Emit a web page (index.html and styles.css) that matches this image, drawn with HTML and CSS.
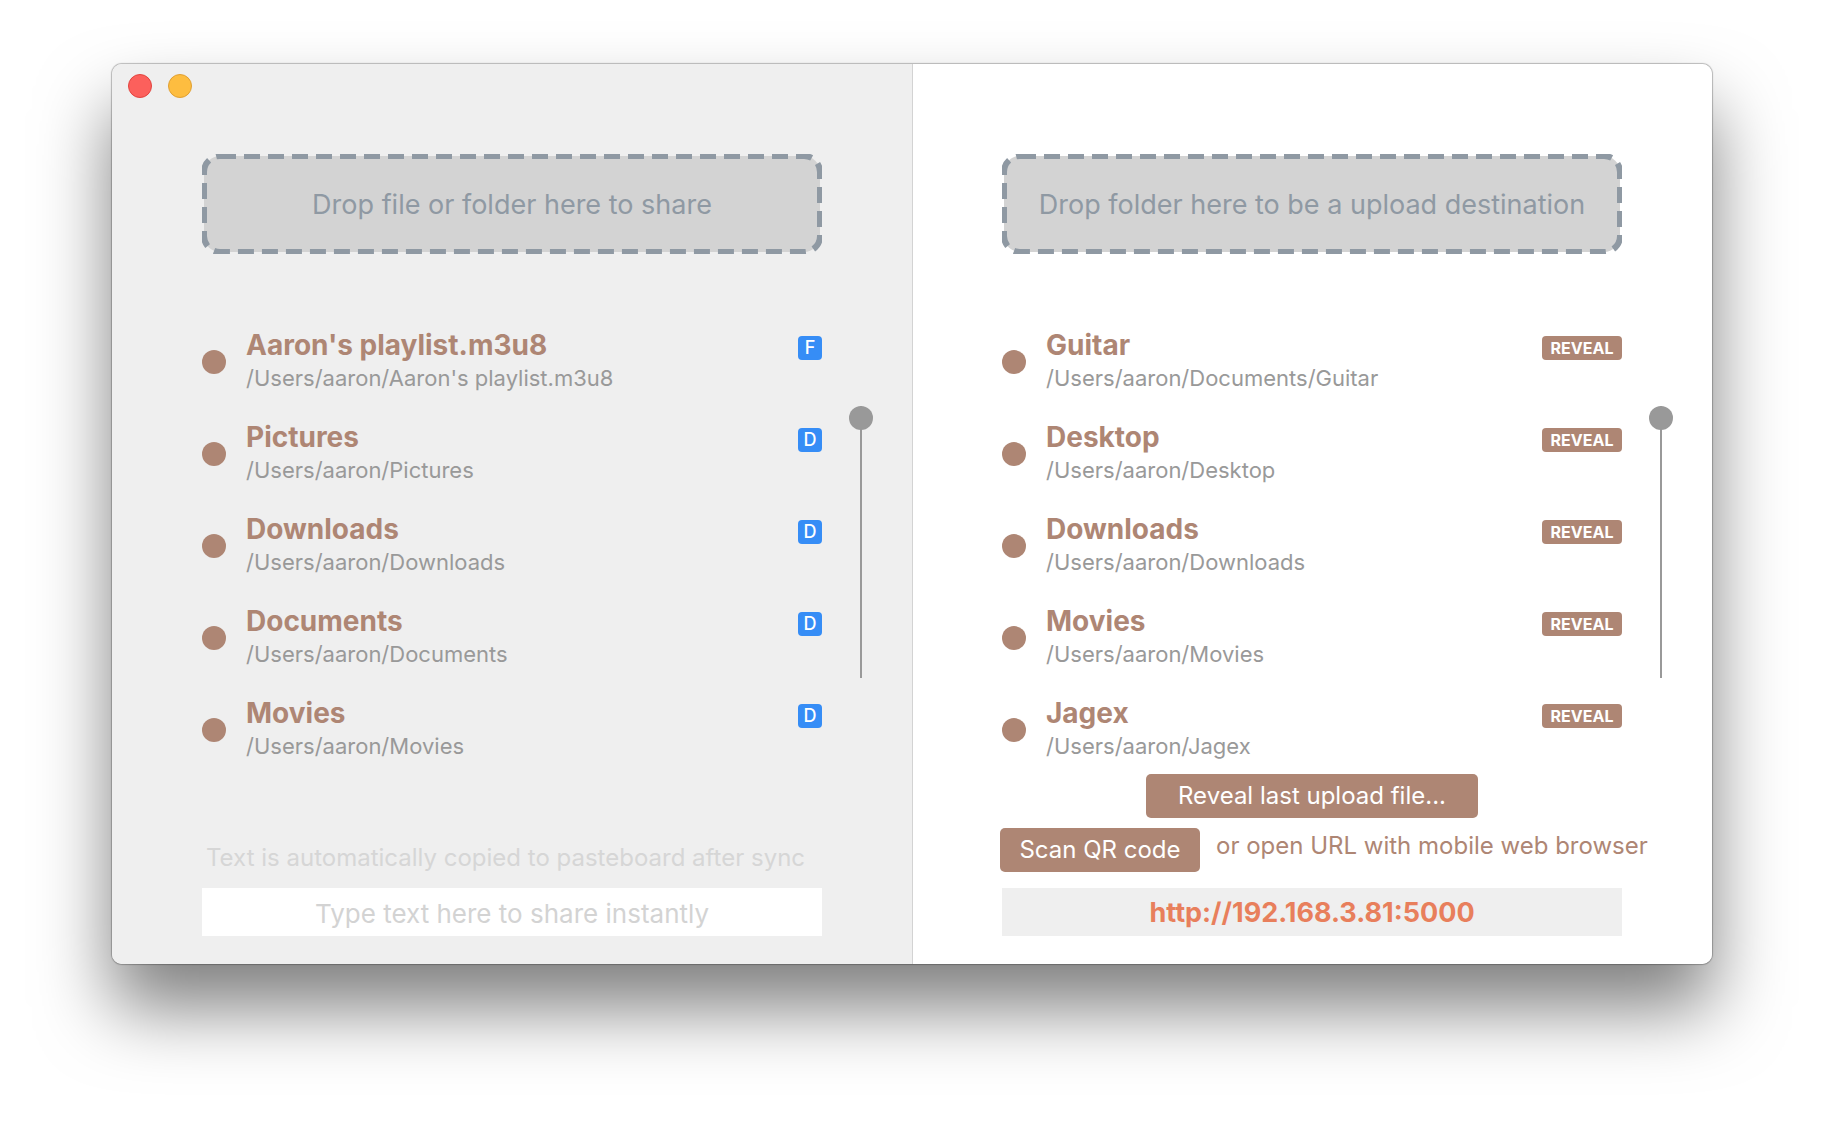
FILE: index.html
```html
<!DOCTYPE html>
<html lang="en">
<head>
    <meta charset="UTF-8">
    <meta name="viewport" content="width=device-width, initial-scale=1.0">
    <title>Share</title>
    <link rel="stylesheet" href="styles.css">
</head>
<body>
    <main class="window">
        <div class="window-controls">
            <button class="control close" aria-label="Close"></button>
            <button class="control minimize" aria-label="Minimize"></button>
        </div>

        <section class="panel share">
            <div class="drop-zone">
                <svg class="drop-outline" aria-hidden="true"><rect class="drop-rect" rx="16" /></svg>
                <span class="drop-text">Drop file or folder here to share</span>
            </div>
            <ul class="file-list">
                <li class="file">
                    <span class="dot"></span>
                    <div class="file-info">
                        <h2>Aaron's playlist.m3u8</h2>
                        <p>/Users/aaron/Aaron's playlist.m3u8</p>
                    </div>
                    <span class="badge">F</span>
                </li>
                <li class="file">
                    <span class="dot"></span>
                    <div class="file-info">
                        <h2>Pictures</h2>
                        <p>/Users/aaron/Pictures</p>
                    </div>
                    <span class="badge">D</span>
                </li>
                <li class="file">
                    <span class="dot"></span>
                    <div class="file-info">
                        <h2>Downloads</h2>
                        <p>/Users/aaron/Downloads</p>
                    </div>
                    <span class="badge">D</span>
                </li>
                <li class="file">
                    <span class="dot"></span>
                    <div class="file-info">
                        <h2>Documents</h2>
                        <p>/Users/aaron/Documents</p>
                    </div>
                    <span class="badge">D</span>
                </li>
                <li class="file">
                    <span class="dot"></span>
                    <div class="file-info">
                        <h2>Movies</h2>
                        <p>/Users/aaron/Movies</p>
                    </div>
                    <span class="badge">D</span>
                </li>
            </ul>
            <input class="scroller" type="range" min="0" max="100" value="0" aria-label="Scroll shared files">
            <div class="panel-footer">
                <label class="hint" for="share-text">Text is automatically copied to pasteboard after sync</label>
                <input class="field" type="text" id="share-text" placeholder="Type text here to share instantly">
            </div>
        </section>

        <section class="panel upload">
            <div class="drop-zone">
                <svg class="drop-outline" aria-hidden="true"><rect class="drop-rect" rx="16" /></svg>
                <span class="drop-text">Drop folder here to be a upload destination</span>
            </div>
            <ul class="file-list">
                <li class="file">
                    <span class="dot"></span>
                    <div class="file-info">
                        <h2>Guitar</h2>
                        <p>/Users/aaron/Documents/Guitar</p>
                    </div>
                    <button class="reveal">REVEAL</button>
                </li>
                <li class="file">
                    <span class="dot"></span>
                    <div class="file-info">
                        <h2>Desktop</h2>
                        <p>/Users/aaron/Desktop</p>
                    </div>
                    <button class="reveal">REVEAL</button>
                </li>
                <li class="file">
                    <span class="dot"></span>
                    <div class="file-info">
                        <h2>Downloads</h2>
                        <p>/Users/aaron/Downloads</p>
                    </div>
                    <button class="reveal">REVEAL</button>
                </li>
                <li class="file">
                    <span class="dot"></span>
                    <div class="file-info">
                        <h2>Movies</h2>
                        <p>/Users/aaron/Movies</p>
                    </div>
                    <button class="reveal">REVEAL</button>
                </li>
                <li class="file">
                    <span class="dot"></span>
                    <div class="file-info">
                        <h2>Jagex</h2>
                        <p>/Users/aaron/Jagex</p>
                    </div>
                    <button class="reveal">REVEAL</button>
                </li>
            </ul>
            <input class="scroller" type="range" min="0" max="100" value="0" aria-label="Scroll upload folders">
            <div class="panel-footer">
                <button class="btn reveal-last">Reveal last upload file...</button>
                <div class="connect">
                    <button class="btn scan">Scan QR code</button>
                    <span class="connect-text">or open URL with mobile web browser</span>
                </div>
                <a class="field url" href="http://192.168.3.81:5000">http://192.168.3.81:5000</a>
            </div>
        </section>
    </main>
</body>
</html>
```
FILE: styles.css
```css
* {
    box-sizing: border-box;
}

body {
    margin: 0;
    padding: 64px 112px 160px;
    min-height: 100vh;
    background-color: #fff;
    font-family: Inter, "Liberation Sans", sans-serif;
}

button, input {
    margin: 0;
    padding: 0;
    border: none;
    font-family: inherit;
}

h2, p, ul {
    margin: 0;
    padding: 0;
}

.window {
    position: relative;
    display: grid;
    grid-template-columns: 1fr 1fr;
    border-radius: 10px;
    box-shadow: 0 0 1px 1px rgba(0, 0, 0, 0.25), 0 44px 72px rgba(0, 0, 0, 0.5);
}

/* Close and minimize buttons lie over the left panel */
.window-controls {
    position: absolute;
    top: 10px;
    left: 16px;
    display: flex;
    gap: 16px;
}

.control {
    width: 24px;
    height: 24px;
    border: 1px solid #e2443f;
    border-radius: 50%;
    background-color: #fc605c;
}

.minimize {
    border-color: #e0a033;
    background-color: #fdbd40;
}

.panel {
    display: grid;
    grid-template-columns: minmax(0, 1fr) 24px;
    grid-template-rows: auto auto 1fr;
    column-gap: 27px;
    padding: 90px 39px 28px 90px;
}

.share {
    background-color: #efefef;
    border-radius: 10px 0 0 10px;
}

.upload {
    background-color: #fff;
    border-radius: 0 10px 10px 0;
    box-shadow: inset 1px 0 #d3d3d3;
}

.drop-zone {
    display: grid;
    height: 100px;
    margin-bottom: 74px;
}

.drop-outline, .drop-text {
    grid-area: 1 / 1;
}

.drop-outline {
    width: 100%;
    height: 100%;
}

/* The outer pixel of the stroke is cut off by the svg edge */
.drop-rect {
    x: 2px;
    y: 2px;
    width: calc(100% - 4px);
    height: calc(100% - 4px);
    fill: #d3d3d3;
    stroke: #8f99a3;
    stroke-width: 6px;
    stroke-dasharray: 16 8;
}

.drop-text {
    place-self: center;
    color: #8f99a3;
    font-size: 27px;
}

.file-list {
    display: flex;
    flex-direction: column;
    gap: 24px;
    list-style: none;
}

.file {
    display: flex;
    align-items: center;
}

.dot {
    width: 24px;
    height: 24px;
    margin-right: 20px;
    border-radius: 50%;
    background-color: #ae8674;
}

.file-info {
    flex: 1;
    padding-bottom: 2px;
}

.file-info h2 {
    color: #ae8674;
    font-size: 28px;
    font-weight: 650;
    line-height: 34px;
}

.file-info p {
    color: #999;
    font-size: 22px;
    line-height: 32px;
}

.badge, .reveal {
    align-self: flex-start;
    height: 24px;
    margin-top: 8px;
    border-radius: 4px;
    color: #fff;
    line-height: 24px;
    text-align: center;
}

.badge {
    width: 24px;
    background-color: #368df6;
    font-size: 18px;
    font-weight: 500;
}

.reveal {
    width: 80px;
    background-color: #ae8674;
    font-size: 16px;
    font-weight: 700;
}

.scroller {
    appearance: none;
    writing-mode: vertical-lr;
    width: 24px;
    height: 272px;
    margin-top: 78px;
    grid-column: 2;
    background: linear-gradient(#999, #999) center / 2px 100% no-repeat;
}

.scroller::-webkit-slider-thumb {
    appearance: none;
    width: 24px;
    height: 24px;
    border-radius: 50%;
    background-color: #999;
}

.file-list, .drop-zone {
    grid-column: 1;
}

.panel-footer {
    grid-column: 1 / -1;
    display: flex;
    flex-direction: column;
    justify-content: flex-end;
    padding-top: 10px;
}

.hint {
    padding-left: 4px;
    margin-bottom: 15px;
    color: #d6d6d6;
    font-size: 24px;
    line-height: 30px;
}

.field {
    display: block;
    height: 48px;
    margin-right: 51px;
    padding-top: 2px;
    background-color: #fff;
    font-size: 26px;
    line-height: 46px;
    text-align: center;
}

.field::placeholder {
    color: #d3d3d3;
}

.url {
    background-color: #efefef;
    color: #e87f5c;
    font-size: 27px;
    font-weight: 700;
    text-decoration: none;
}

.btn {
    height: 44px;
    padding-bottom: 2px;
    border-radius: 5px;
    background-color: #ae8674;
    color: #fff;
    font-size: 24px;
}

.reveal-last {
    align-self: center;
    width: 332px;
    margin-right: 51px;
}

.connect {
    display: flex;
    gap: 16px;
    margin: 10px 0 16px -2px;
}

.scan {
    flex: none;
    width: 200px;
}

.connect-text {
    color: #ae8674;
    font-size: 24px;
    line-height: 36px;
    white-space: nowrap;
}
```
